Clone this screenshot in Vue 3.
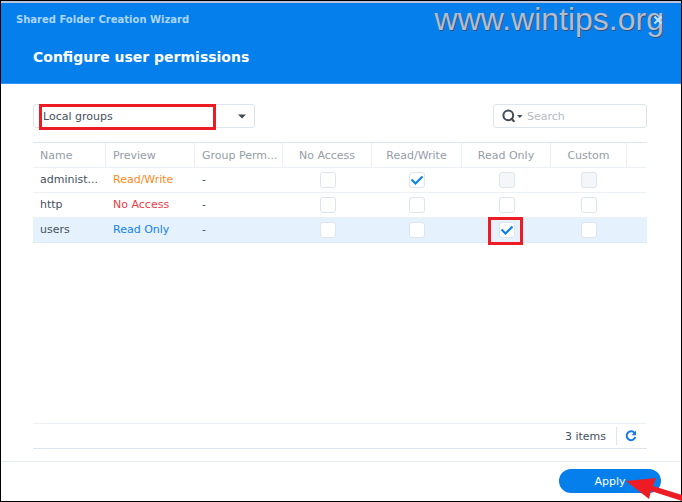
<script setup>
import { ref } from 'vue'

const scope = ref('Local groups')
const query = ref('')
const modes = ['No Access', 'Read/Write', 'Read Only', 'Custom']
const rows = ref([
  { name: 'administ...', preview: 'Read/Write', tone: 'orange', access: 'Read/Write', locked: ['Read Only', 'Custom'] },
  { name: 'http', preview: 'No Access', tone: 'red', access: '', locked: [] },
  { name: 'users', preview: 'Read Only', tone: 'blue', access: 'Read Only', locked: [], selected: true }
])

function toggle(row, mode) {
  row.access = row.access === mode ? '' : mode
}
</script>

<template>
  <div class="wizard">
    <header class="head">
      <div class="titlebar">
        <span class="caption">Shared Folder Creation Wizard</span>
        <button class="close" type="button" aria-label="Close">
          <svg width="10" height="10" viewBox="0 0 10 10"><path d="M1.500 1.500l7 7M8.500 1.500l-7 7" /></svg>
        </button>
      </div>
      <h1>Configure user permissions</h1>
      <div class="watermark">www.wintips.org</div>
    </header>

    <main class="body">
      <div class="toolbar">
        <div class="picker">
          <select v-model="scope" aria-label="Account type">
            <option>Local groups</option>
          </select>
          <svg class="caret" width="8" height="5" viewBox="0 0 8 5"><path d="M0 0.5h8L4 4.5z" /></svg>
          <span class="mark mark-picker"></span>
        </div>
        <label class="search">
          <svg width="21" height="14" viewBox="0 0 21 14">
            <circle cx="6.3" cy="6.3" r="4.9" />
            <path class="handle" d="M9 9.2l3.4 3.6" />
            <path class="tri" d="M15 6h5.6l-2.8 3z" />
          </svg>
          <input v-model="query" type="text" placeholder="Search" aria-label="Search" />
        </label>
      </div>

      <table class="grid">
        <colgroup>
          <col class="c-name" />
          <col class="c-preview" />
          <col class="c-group" />
          <col class="c-none" />
          <col class="c-write" />
          <col class="c-read" />
          <col class="c-custom" />
          <col />
        </colgroup>
        <thead>
          <tr>
            <th>Name</th>
            <th>Preview</th>
            <th>Group Perm...</th>
            <th v-for="mode in modes" :key="mode" class="mid">{{ mode }}</th>
            <th></th>
          </tr>
        </thead>
        <tbody>
          <tr v-for="row in rows" :key="row.name" :class="{ selected: row.selected }">
            <td>{{ row.name }}</td>
            <td :class="row.tone">{{ row.preview }}</td>
            <td>-</td>
            <td v-for="mode in modes" :key="mode" class="mid">
              <span class="tick">
                <input
                  type="checkbox"
                  :aria-label="row.name + ' ' + mode"
                  :checked="row.access === mode"
                  :disabled="row.locked.includes(mode)"
                  @change="toggle(row, mode)"
                />
                <svg v-if="row.access === mode" class="check" width="16" height="16" viewBox="0 0 16 16">
                  <path d="M2.500 7.500l4 4 7-7" />
                </svg>
                <span v-if="row.selected && mode === 'Read Only'" class="mark mark-tick"></span>
              </span>
            </td>
            <td></td>
          </tr>
        </tbody>
      </table>

      <div class="status">
        <span class="count">3 items</span>
        <button class="reload" type="button" aria-label="Refresh">
          <svg width="12" height="12" viewBox="0 0 12 12">
            <path class="arc" d="M9.600 3.100A4.400 4.400 0 1 0 10.300 7" />
            <path class="tip" d="M11 0.8v4.400H6.600z" />
          </svg>
        </button>
      </div>
    </main>

    <footer class="foot">
      <button class="apply" type="button">Apply</button>
      <svg class="arrow" width="56" height="24" viewBox="0 0 56 24">
        <path d="M0 3l30-3-3 8 29 9v6L25 13l-2 8z" />
      </svg>
    </footer>
  </div>
</template>

<style>
body {
  margin: 0;
}
</style>

<style scoped>
* {
  box-sizing: border-box;
}

.wizard {
  display: flex;
  flex-direction: column;
  min-height: 100vh;
  border: 1px solid #000;
  background: #fff;
  color: #46515c;
  font: 11px/16px "DejaVu Sans", Verdana, sans-serif;
}

button,
input,
select {
  margin: 0;
  padding: 0;
  border: 0;
  background: none;
  color: inherit;
  font: inherit;
}

.head {
  position: relative;
  height: 83px;
  border-top: 2px solid #b9c4dc;
  border-bottom: 1px solid #2f95f5;
  background: #057feb;
}

.titlebar {
  display: flex;
  align-items: center;
  justify-content: space-between;
  height: 34px;
  padding: 0 18px 0 15px;
}

.caption {
  color: #acd6fb;
  font-size: 10px;
  font-weight: bold;
}

.close {
  position: relative;
  z-index: 1;
  display: flex;
}

.close path {
  fill: none;
  stroke: #c4e4ff;
  stroke-width: 2;
}

h1 {
  margin: 0;
  padding: 10px 32px 0;
  color: #fff;
  font-size: 14px;
  line-height: 20px;
}

.watermark {
  position: absolute;
  top: 0;
  right: 17px;
  color: #b4bdcd;
  font: 32px/32px "Liberation Sans", Arial, sans-serif;
  text-shadow: 1px 1px 0 #33517c;
  pointer-events: none;
}

.body {
  display: flex;
  flex: 1;
  flex-direction: column;
  padding: 20px 34px 12px 32px;
}

.toolbar {
  display: flex;
  justify-content: space-between;
  margin-bottom: 14px;
}

.picker {
  position: relative;
  width: 222px;
}

.picker select {
  width: 100%;
  height: 24px;
  padding: 2px 0 0 9px;
  border: 1px solid #dce4ec;
  border-radius: 3px;
  appearance: none;
}

.caret {
  position: absolute;
  top: 10px;
  right: 9px;
  fill: #414b55;
}

.mark {
  position: absolute;
  border: 3px solid #ed1c24;
  pointer-events: none;
}

.mark-picker {
  top: 0;
  left: 6px;
  width: 177px;
  height: 26px;
}

.search {
  display: flex;
  align-items: center;
  gap: 4px;
  width: 154px;
  height: 24px;
  padding-left: 8px;
  border: 1px solid #dce4ec;
  border-radius: 3px;
}

.search svg {
  flex: none;
}

.search circle,
.handle {
  fill: none;
  stroke: #414b55;
  stroke-width: 2;
}

.tri {
  fill: #414b55;
}

.search input {
  flex: 1;
  min-width: 0;
  padding-top: 2px;
  outline: 0;
}

.search input::placeholder {
  color: #b4bac0;
  opacity: 1;
}

.grid {
  width: 100%;
  border-top: 1px solid #dce6f0;
  border-spacing: 0;
  table-layout: fixed;
}

.c-name {
  width: 73px;
}

.c-preview,
.c-none,
.c-read {
  width: 89px;
}

.c-group {
  width: 88px;
}

.c-write {
  width: 90px;
}

.c-custom {
  width: 76px;
}

th,
td {
  height: 25px;
  padding: 0 0 0 7px;
  border-bottom: 1px solid #ebf0f5;
  text-align: left;
  white-space: nowrap;
}

th {
  padding-top: 1px;
  border-right: 1px solid #ebf0f5;
  color: #959da5;
  font-weight: normal;
}

th:last-child {
  border-right: 0;
}

td.mid {
  padding: 0;
}

th.mid {
  padding-left: 0;
}

.mid {
  text-align: center;
}

.selected td {
  border-bottom-color: #dceaf7;
  background: #e5f1fd;
}

.selected td.orange,
.orange {
  color: #fa8a1e;
}

.red {
  color: #e63c46;
}

.blue {
  color: #1482eb;
}

.tick {
  position: relative;
  display: block;
  width: 16px;
  height: 16px;
  margin: 0 auto;
}

.tick input {
  display: block;
  width: 16px;
  height: 16px;
  border: 1px solid #dce4ee;
  border-radius: 3px;
  background: #fff;
  appearance: none;
}

.tick input:disabled {
  background: #f4f6fa;
}

.check {
  position: absolute;
  top: 0;
  left: 0;
  fill: none;
  stroke: #057feb;
  stroke-width: 2;
  pointer-events: none;
}

.mark-tick {
  top: -5px;
  left: -11px;
  width: 35px;
  height: 28px;
}

.status {
  display: flex;
  align-items: center;
  justify-content: flex-end;
  height: 26px;
  margin-top: auto;
  border-top: 1px solid #ebf0f5;
  border-bottom: 1px solid #dce6f0;
}

.count {
  padding-top: 2px;
}

.reload {
  display: flex;
  align-items: center;
  height: 18px;
  margin-left: 10px;
  padding: 0 10px 0 8px;
  border-left: 1px solid #dce6f0;
}

.arc {
  fill: none;
  stroke: #1478eb;
  stroke-width: 2;
}

.tip {
  fill: #1478eb;
}

.foot {
  position: relative;
  display: flex;
  justify-content: flex-end;
  padding: 7px 20px 8px;
  border-top: 1px solid #e6ebf0;
}

.apply {
  width: 102px;
  height: 24px;
  padding-top: 2px;
  border-radius: 12px;
  background: #057feb;
  color: #fff;
}

.arrow {
  position: absolute;
  right: -1px;
  bottom: -1px;
  fill: #ed1c24;
  pointer-events: none;
}
</style>
